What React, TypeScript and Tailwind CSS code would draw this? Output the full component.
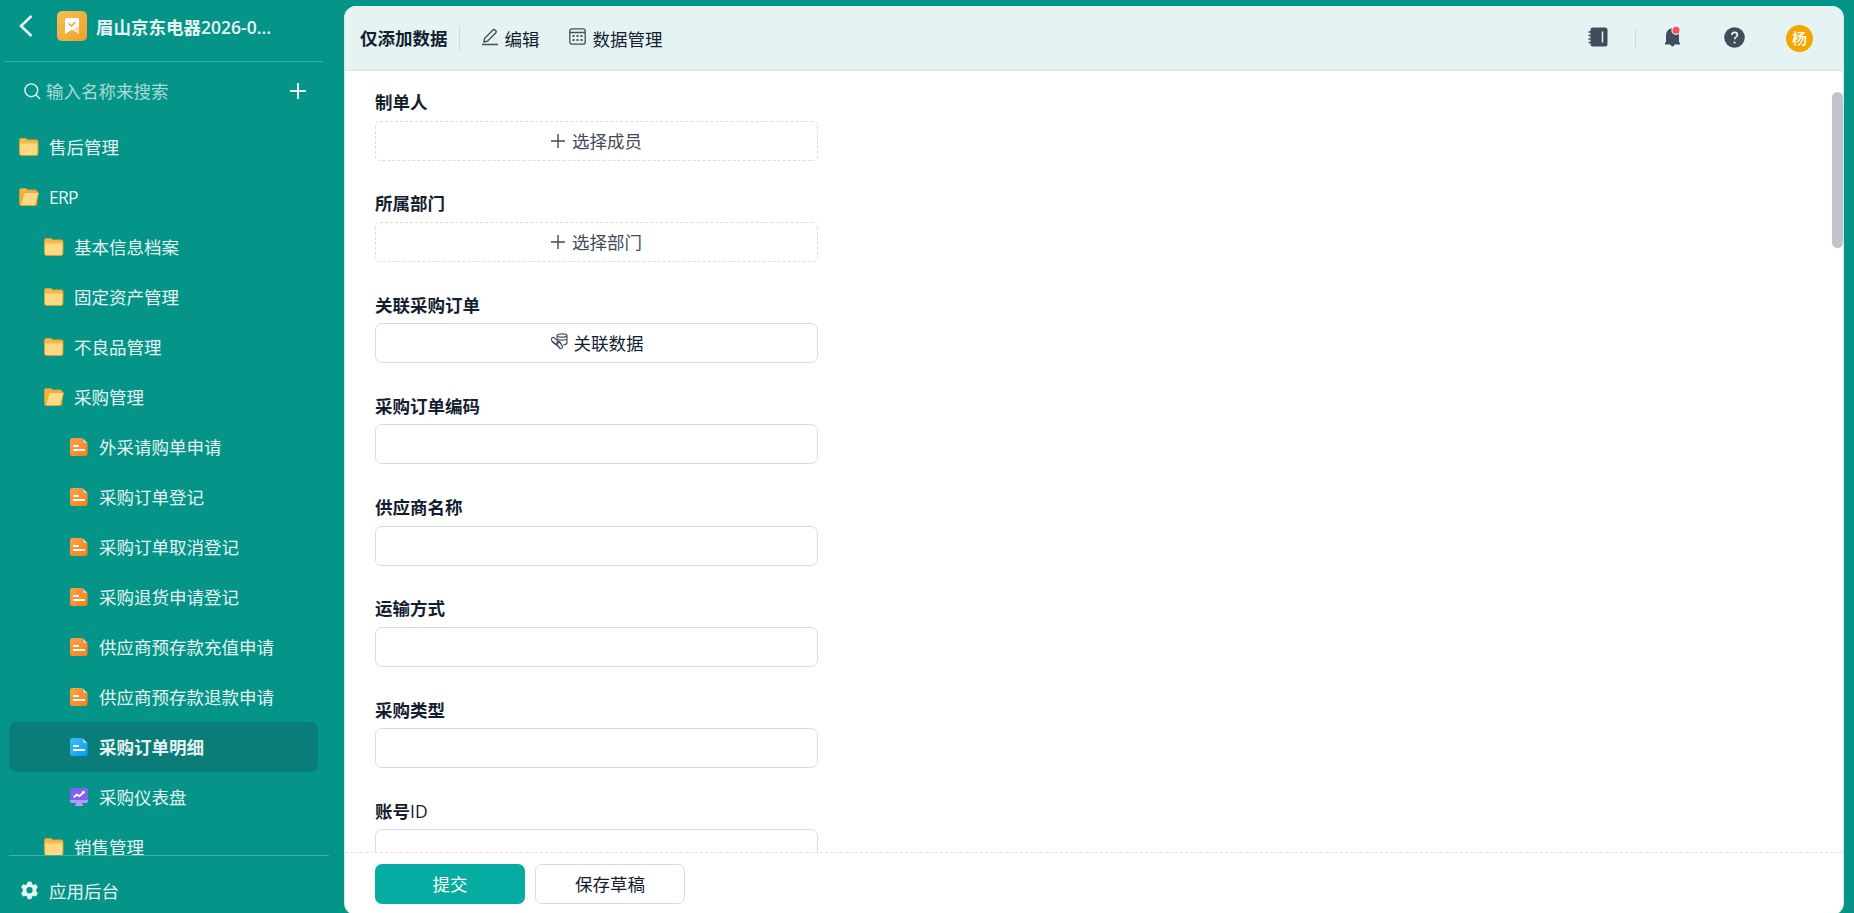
import type { ReactNode } from "react"

type IconKind = "folder" | "folderOpen" | "form" | "formActive" | "dashboard"

interface MenuItem {
  label: string
  icon: IconKind
  level: 0 | 1 | 2
  active?: boolean
}

interface Field {
  label: string
  kind: "member" | "relation" | "input"
  text?: string
}

const menu: MenuItem[] = [
  { label: "售后管理", icon: "folder", level: 0 },
  { label: "ERP", icon: "folderOpen", level: 0 },
  { label: "基本信息档案", icon: "folder", level: 1 },
  { label: "固定资产管理", icon: "folder", level: 1 },
  { label: "不良品管理", icon: "folder", level: 1 },
  { label: "采购管理", icon: "folderOpen", level: 1 },
  { label: "外采请购单申请", icon: "form", level: 2 },
  { label: "采购订单登记", icon: "form", level: 2 },
  { label: "采购订单取消登记", icon: "form", level: 2 },
  { label: "采购退货申请登记", icon: "form", level: 2 },
  { label: "供应商预存款充值申请", icon: "form", level: 2 },
  { label: "供应商预存款退款申请", icon: "form", level: 2 },
  { label: "采购订单明细", icon: "formActive", level: 2, active: true },
  { label: "采购仪表盘", icon: "dashboard", level: 2 },
  { label: "销售管理", icon: "folder", level: 1 },
]

const fields: Field[] = [
  { label: "制单人", kind: "member", text: "选择成员" },
  { label: "所属部门", kind: "member", text: "选择部门" },
  { label: "关联采购订单", kind: "relation", text: "关联数据" },
  { label: "采购订单编码", kind: "input" },
  { label: "供应商名称", kind: "input" },
  { label: "运输方式", kind: "input" },
  { label: "采购类型", kind: "input" },
  { label: "账号ID", kind: "input" },
]

const indent = {
  0: "pl-[10px]",
  1: "pl-[35px]",
  2: "pl-[60px]",
}

function FolderIcon() {
  return (
    <svg width="20" height="20" viewBox="0 0 20 20" fill="none">
      <path d="M.5 3.200Q.5 1.500 2.200 1.500h4.300q.7 0 1.200.5l1 .9h8.600q1.700 0 1.700 1.700v9H.5z" fill="#f7b84b" />
      <path d="M.9 6.500h17.800v10.200q0 1.600-1.600 1.600H2.500Q.9 18.300.9 16.700z" fill="#fed983" />
      <path
        d="M.5 3.200Q.5 1.500 2.200 1.500h4.300q.7 0 1.200.5l1 .9h8.600q1.700 0 1.700 1.700v12.100q0 1.800-1.800 1.800H2.300Q.5 18.500.5 16.700z"
        stroke="#e3a22f"
        strokeWidth=".9"
      />
    </svg>
  )
}

function FolderOpenIcon() {
  return (
    <svg width="20" height="20" viewBox="0 0 20 20" fill="none">
      <path
        d="M.5 3.200Q.5 1.500 2.200 1.500h4.300q.7 0 1.200.5l1 .9h7.600q1.700 0 1.700 1.700v12q0 1.900-1.800 1.900H2.300Q.5 18.500.5 16.700z"
        fill="#f2b144"
        stroke="#e09c27"
        strokeWidth=".8"
      />
      <path
        d="M4.900 6.300q.4-1 1.400-1h12q1.400 0 1.100 1.300l-2.700 10.700q-.3 1.200-1.500 1.200H2.500q-1.200 0-.9-1.200z"
        fill="#fed983"
        stroke="#e5a22c"
        strokeWidth=".9"
      />
    </svg>
  )
}

function FormIcon({ active }: { active?: boolean }) {
  const id = active ? "form-blue" : "form-orange"
  return (
    <svg width="20" height="20" viewBox="0 0 20 20" fill="none">
      <defs>
        <linearGradient id={id} x1="1" y1="1" x2="19" y2="19" gradientUnits="userSpaceOnUse">
          <stop stopColor={active ? "#3fbcfa" : "#ff9f45"} />
          <stop offset="1" stopColor={active ? "#0a9cf5" : "#f9801a"} />
        </linearGradient>
      </defs>
      <path d="M3.200 1h9.900v3.200q0 1.800 1.800 1.800h3.600v10.800q0 2.200-2.200 2.200H3.200Q1 19 1 16.800V3.200Q1 1 3.200 1z" fill={`url(#${id})`} />
      <path d="M13.600 1l4.900 5h-3.300q-1.600 0-1.600-1.600z" fill={active ? "#8ed7ff" : "#ffc68b"} />
      <path d="M4 9h5.800M4 13h12" stroke="white" strokeWidth="1.900" />
    </svg>
  )
}

function DashboardIcon() {
  return (
    <svg width="20" height="20" viewBox="0 0 20 20" fill="none">
      <path d="M7 14h6v3.500h1V19H6v-1.500h1z" fill="#b59cff" />
      <path d="M1 12h18v2.300q0 1.700-1.700 1.700H2.700Q1 16 1 14.300z" fill="#b09afb" />
      <path d="M2.700 1h14.600Q19 1 19 2.700V13H1V2.700Q1 1 2.700 1z" fill="#8062ec" />
      <path d="M4.800 10.200l3-2.600 2.600 1.500 4.300-4" stroke="white" strokeWidth="1.800" />
      <circle cx="14.400" cy="5.200" r="1.500" fill="white" />
    </svg>
  )
}

function MenuIcon({ kind }: { kind: IconKind }) {
  if (kind === "folder") return <FolderIcon />
  if (kind === "folderOpen") return <FolderOpenIcon />
  if (kind === "dashboard") return <DashboardIcon />
  return <FormIcon active={kind === "formActive"} />
}

function PlusIcon({ size, bold }: { size: number; bold?: boolean }) {
  return (
    <svg width={size} height={size} viewBox="0 0 16 16" stroke="currentColor" strokeWidth={bold ? 2 : 1.6}>
      <path d="M8 0v16M0 8h16" />
    </svg>
  )
}

function Sidebar() {
  return (
    <aside className="flex w-[344px] shrink-0 flex-col text-white/90">
      <div className="ml-1 flex h-[62px] w-[319px] shrink-0 items-center border-b border-white/25 pb-[9px] pl-[15px]">
        <svg width="14" height="22" viewBox="0 0 14 22" fill="none" stroke="currentColor" strokeWidth="2.600">
          <path d="M12.500 1L2 11l10.500 10" />
        </svg>
        <span className="ml-6 flex size-[30px] items-center justify-center rounded-[5px] bg-linear-to-br from-[#f7bd55] to-[#eda224]">
          <svg width="16" height="18" viewBox="0 0 16 18" fill="none">
            <path d="M1 2.500Q1 1 2.500 1h11Q15 1 15 2.500V17l-7-4.200L1 17z" fill="white" />
            <path d="M15 9.500V17l-7-4.200L1 17v-.5z" fill="#fbdca8" />
            <path d="M4.700 6.500l2.700 2.500 4.200-4" stroke="#f0a935" strokeWidth="1.700" />
          </svg>
        </span>
        <span className="ml-[9px] pt-[2px] font-bold">
          眉山京东电器<span className="font-semibold">2026-0...</span>
        </span>
      </div>

      <div className="flex h-[58px] shrink-0 items-center pl-6">
        <svg width="17" height="17" viewBox="0 0 17 17" fill="none" stroke="currentColor" strokeWidth="1.400">
          <circle cx="7.300" cy="7.300" r="6.400" />
          <path d="M12 12l4 4" />
        </svg>
        <span className="ml-[5px] text-white/65">输入名称来搜索</span>
        <span className="ml-[121px]">
          <PlusIcon size={16} bold />
        </span>
      </div>

      <nav className="mt-[2px] min-h-0 flex-1 overflow-hidden pl-[9px]">
        {menu.map((item) => (
          <div
            key={item.label}
            className={`flex h-[50px] w-[309px] items-center gap-[10px] rounded-lg ${indent[item.level]} ${
              item.active ? "bg-[#0a7d78] font-bold" : ""
            }`}
          >
            <MenuIcon kind={item.icon} />
            <span className={item.label === "ERP" ? "tracking-[-0.700px]" : ""}>{item.label}</span>
          </div>
        ))}
      </nav>

      <div className="ml-[9px] flex h-[58px] w-[320px] shrink-0 items-center gap-[10px] border-t border-white/25 pl-[11px] pt-[12px]">
        <svg width="19" height="19" viewBox="0 0 20 20" fill="currentColor" fillRule="evenodd">
          <path d="M8 .8Q10 0 12 .8l.7 2.400 1.500.9 2.500-.6q1.600 1.300 2 3.400l-1.700 1.900v1.900l1.700 2q-.4 2-2 3.500l-2.500-.7-1.500.9-.7 2.500q-2 .8-4 0l-.7-2.500-1.500-.9-2.500.7q-1.600-1.500-2-3.500l1.700-2V8.800L1.300 6.900q.4-2.100 2-3.400l2.500.6 1.500-.9zM10 6.400a3.300 3.300 0 100 6.600 3.300 3.300 0 000-6.600z" />
        </svg>
        <span>应用后台</span>
      </div>
    </aside>
  )
}

function ToolbarItem({ icon, label }: { icon: ReactNode; label: string }) {
  return (
    <div className="flex items-center gap-[7px]">
      {icon}
      <span className="pt-px">{label}</span>
    </div>
  )
}

function Toolbar() {
  return (
    <header className="flex h-[65px] shrink-0 items-center border-b border-[#dfe2e8] bg-[#e5f4f2] pl-[15px]">
      <span className="font-bold">仅添加数据</span>
      <span className="ml-[11px] mr-[22px] h-[25px] w-px bg-[#d0dcdd]" />
      <ToolbarItem
        label="编辑"
        icon={
          <svg width="16" height="18" viewBox="0 0 16 18" fill="none" stroke="#434e5e" strokeWidth="1.400" className="mb-[3px]">
            <path d="M2 14l.5-3.500L11 2q1-1 2 0l.8.8q1 1 0 2L5.500 13.200zM0 16.500h16" />
          </svg>
        }
      />
      <div className="ml-[29px]">
        <ToolbarItem
          label="数据管理"
          icon={
            <svg width="17" height="17" viewBox="0 0 17 17" fill="none" stroke="#434e5e" strokeWidth="1.300" className="mb-[3px]">
              <rect x=".8" y=".8" width="15.400" height="15.400" rx="2.200" />
              <path d="M1 4.500h15" />
              <path d="M3.500 8h2M7.500 8h2M11.500 8h2M3.500 12h2M7.500 12h2M11.500 12h2" strokeWidth="2.100" />
            </svg>
          }
        />
      </div>

      <div className="ml-auto flex items-center pr-[30px] text-[#414d5c]">
        <svg width="20" height="20" viewBox="0 0 20 20" className="mb-[2px]">
          <rect x="2.500" y=".5" width="17" height="19" rx="2.500" fill="currentColor" />
          <path d="M.5 5h3M.5 8.500h3M.5 12h3M.5 15.500h3" stroke="currentColor" strokeWidth="1.600" />
          <path d="M14.500 4.500v11" stroke="#e5f4f2" strokeWidth="1.500" />
        </svg>
        <span className="ml-[27px] h-5 w-px bg-[#d0dcdd]" />
        <svg width="18" height="22" viewBox="0 0 18 22" className="mb-[2px] ml-[28px]">
          <path d="M1 18.500v-1.400l1-1V9.500q0-4.800 4-6.700Q8 1.600 10 2.800q5 1.900 5 6.700v6.600l1 1v1.400h-5.400Q9.800 20.500 8.500 20.500T6.400 18.500z" fill="currentColor" />
          <circle cx="12" cy="4.300" r="4.100" fill="#f4514f" stroke="#e5f4f2" strokeWidth="1.100" />
        </svg>
        <svg width="21" height="21" viewBox="0 0 21 21" fill="none" className="mb-[2px] ml-[42px]">
          <circle cx="10.500" cy="10.500" r="10.300" fill="currentColor" />
          <path d="M7.800 8q.1-2.700 2.800-2.700T13.400 7.800q0 1.200-1.300 2.100T10.700 12.300" stroke="#e5f4f2" strokeWidth="1.700" />
          <circle cx="10.600" cy="15.500" r="1.100" fill="#e5f4f2" />
        </svg>
        <span className="ml-[41px] flex size-[27px] items-center justify-center rounded-full bg-[#f2a800] text-[15px] font-medium text-white">
          杨
        </span>
      </div>
    </header>
  )
}

function LinkDataIcon() {
  return (
    <svg width="17" height="17" viewBox="0 0 17 17" fill="none" stroke="#434e5e" strokeWidth="1.200" className="mb-[3px]">
      <ellipse cx="11" cy="2.500" rx="4.900" ry="1.700" />
      <path d="M6.100 2.500v3.300M15.900 2.500v8q-1 1.200-3.400 1.400M6.200 6.300q4.800 1.800 9.600 0" />
      <rect x="-.2" y="6" width="8" height="3.800" rx="1.900" transform="rotate(43 3.800 7.900)" />
      <rect x="5" y="10.400" width="7.400" height="3.600" rx="1.800" transform="rotate(58 8.700 12.200)" />
      <path d="M1 8.800l7.500 5.500M6.800 8.200l3.200 2.300" />
    </svg>
  )
}

function FormField({ field }: { field: Field }) {
  return (
    <div className="h-[101.250px] w-[443px]">
      <div className="flex h-[37px] items-center font-bold">
        {field.label === "账号ID" ? (
          <>
            账号<span className="font-medium">ID</span>
          </>
        ) : (
          field.label
        )}
      </div>
      {field.kind === "member" && (
        <button className="flex h-10 w-full items-center justify-center gap-[7px] rounded-[5px] border border-dashed border-[#d9dce4] text-[#434a58]">
          <PlusIcon size={14} />
          {field.text}
        </button>
      )}
      {field.kind === "relation" && (
        <button className="flex h-10 w-full items-center justify-center gap-[6px] rounded-[7px] border border-[#d9dce4] pl-px">
          <LinkDataIcon />
          {field.text}
        </button>
      )}
      {field.kind === "input" && <input className="block h-10 w-full rounded-[7px] border border-[#d9dce4] px-3" />}
    </div>
  )
}

export default function App() {
  return (
    <div className="flex h-[913px] w-[1854px] overflow-hidden bg-[#049488] font-['Open_Sans','Noto_Sans_CJK_SC',sans-serif] text-[17.500px] leading-6">
      <Sidebar />
      <main className="mt-[6px] flex h-[909px] w-[1500px] shrink-0 flex-col overflow-hidden rounded-xl border-x border-[#cfeae7] bg-white text-[#141e31]">
        <Toolbar />
        <div className="relative h-[781px] shrink-0 overflow-hidden pl-[30px] pt-[12.600px]">
          {fields.map((field) => (
            <FormField key={field.label} field={field} />
          ))}
          <div className="absolute right-0 top-[21px] h-[156px] w-[11px] rounded-full bg-[#c1c4cd]" />
        </div>
        <footer className="flex flex-1 gap-[10px] border-t border-dashed border-[#e1e3e9] pl-[30px] pt-[11px]">
          <button className="h-10 w-[150px] rounded-[7px] bg-[#05aca2] text-white">提交</button>
          <button className="h-10 w-[150px] rounded-[7px] border border-[#d9dce4]">保存草稿</button>
        </footer>
      </main>
    </div>
  )
}
